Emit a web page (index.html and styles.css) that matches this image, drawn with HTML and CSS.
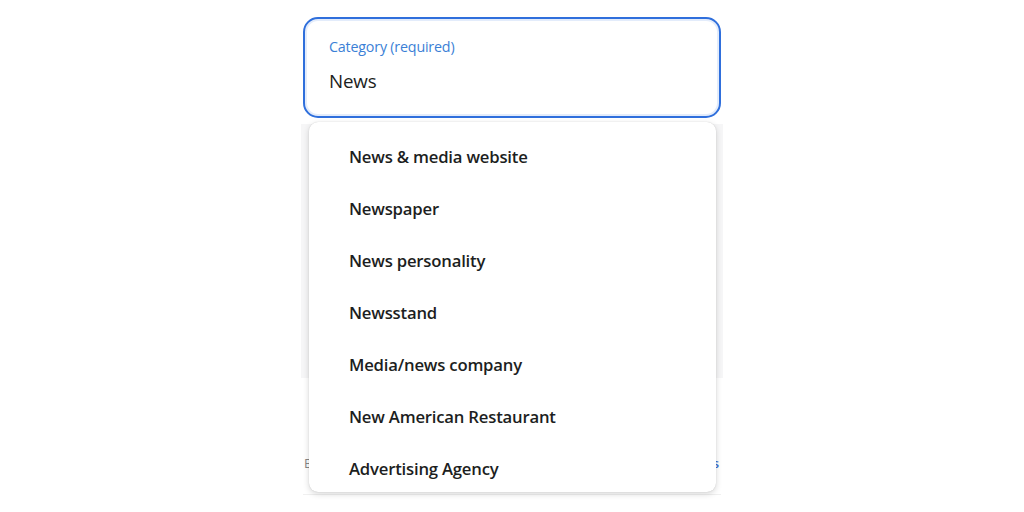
FILE: index.html
```html
<!DOCTYPE html>
<html>
<head>
<meta charset="utf-8">
<link rel="stylesheet" href="styles.css">
</head>
<body>
<div class="stage">
  <div class="field">
    <div class="field-label">Category (required)</div>
    <div class="field-value">News</div>
  </div>
  <div class="behind">
    <div class="behind-panel"></div>
    <div class="behind-footer">
      <span class="behind-left">E</span>
      <span class="behind-right">s</span>
    </div>
  </div>
  <div class="menu">
    <ul class="menu-list">
      <li class="menu-item">News &amp; media website</li>
      <li class="menu-item">Newspaper</li>
      <li class="menu-item">News personality</li>
      <li class="menu-item">Newsstand</li>
      <li class="menu-item">Media/news company</li>
      <li class="menu-item">New American Restaurant</li>
      <li class="menu-item">Advertising Agency</li>
    </ul>
  </div>
</div>
</body>
</html>
```

FILE: styles.css
```css
html, body {
  margin: 0;
  padding: 0;
  background: #ffffff;
}
body {
  width: 1024px;
  height: 512px;
  overflow: hidden;
  font-family: "Open Sans", "Noto Sans", "Liberation Sans", sans-serif;
}
.stage {
  position: relative;
  width: 418px;
  margin: 0 auto;
  padding-top: 17px;
}
.field {
  box-sizing: border-box;
  height: 101px;
  border: 2.5px solid #2f6fdc;
  border-radius: 15px;
  box-shadow: inset 0 0 0 2px #e3ecfb;
  padding: 18px 24px 0 24px;
  background: #fff;
}
.field-label {
  font-size: 14.3px;
  line-height: 20px;
  color: #3b7fd6;
  letter-spacing: -0.2px;
}
.field-value {
  margin-top: 12px;
  font-size: 18.8px;
  line-height: 24px;
  color: #1c1e21;
  letter-spacing: -0.2px;
}
.behind {
  padding: 6px 0 0 0;
}
.behind-panel {
  height: 254px;
  background: #f6f6f7;
  margin: 0 -2px;
}
.behind-footer {
  display: flex;
  justify-content: space-between;
  padding: 76px 2px 0 1px;
  height: 40px;
  font-size: 13px;
  border-bottom: 1px solid #f0f0f0;
}
.behind-left {
  color: #888;
}
.behind-right {
  color: #3b6fd0;
  font-weight: 600;
}
.menu {
  position: absolute;
  left: 6px;
  right: 5px;
  top: 122px;
  height: 370px;
  background: #fff;
  border-radius: 9px;
  box-shadow: 0 2px 6px rgba(0,0,0,0.16), 0 0 1px rgba(0,0,0,0.2);
  overflow: hidden;
}
.menu-list {
  list-style: none;
  margin: 0;
  padding: 9px 0 0 0;
}
.menu-item {
  height: 52px;
  line-height: 52px;
  padding-left: 40px;
  font-size: 16.7px;
  font-weight: 600;
  color: #1c1e21;
  letter-spacing: -0.2px;
}
```
